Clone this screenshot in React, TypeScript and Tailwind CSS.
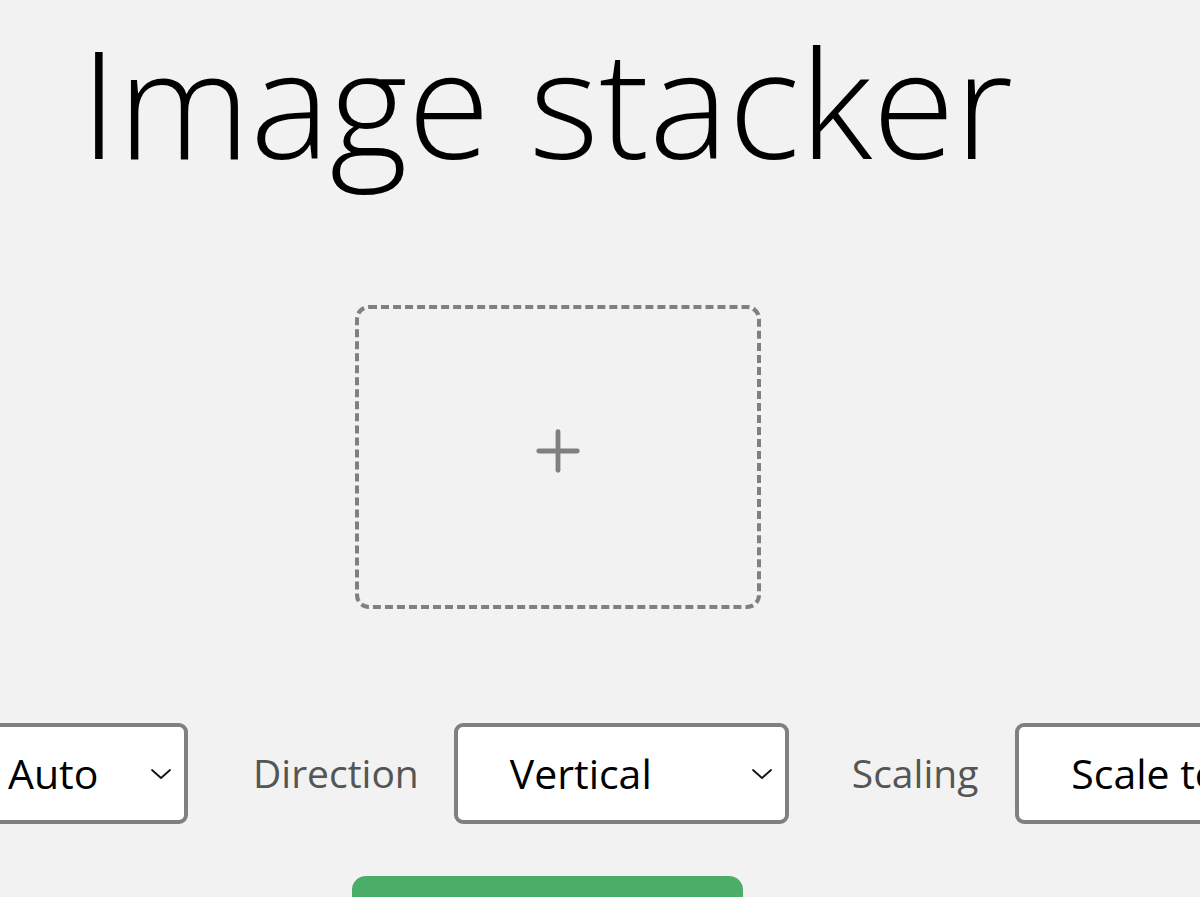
import { Plus } from 'lucide-react'

function Chevron() {
  return (
    <svg width="22" height="12" viewBox="0 0 22 12" fill="none" stroke="#111" strokeWidth="1.8" strokeLinecap="round" strokeLinejoin="round">
      <path d="M2 2l9 8 9-8" />
    </svg>
  )
}

function FakeSelect({ value, width }: { value: string; width: string }) {
  return (
    <div className={`flex shrink-0 items-center justify-between h-[101px] rounded-[9px] border-4 border-[#808080] bg-white pl-[52px] pr-[12px] ${width}`}>
      <span className="text-[41px] text-black whitespace-nowrap">{value}</span>
      <Chevron />
    </div>
  )
}

function App() {
  return (
    <div className="min-h-screen w-full overflow-hidden bg-[#f2f2f2] font-['Open_Sans',sans-serif]">
      <main className="flex flex-col">
        <h1 className="ml-[80px] mt-[26px] text-[150px] leading-none font-light text-black whitespace-nowrap">
          Image stacker
        </h1>

        <div className="ml-[355px] mt-[129px] flex h-[304px] w-[406px] items-center justify-center rounded-[14px] border-4 border-dashed border-[#808080]">
          <Plus size={66} strokeWidth={1.75} color="#808080" className="mb-[12px]" />
        </div>

        <div className="mt-[114px] ml-[-48px] flex items-center">
          <FakeSelect value="Auto" width="w-[236px]" />
          <label className="ml-[65px] mr-[35px] shrink-0 whitespace-nowrap text-[39px] text-[#555]">Direction</label>
          <FakeSelect value="Vertical" width="w-[335px]" />
          <label className="ml-[63px] mr-[37px] shrink-0 whitespace-nowrap text-[39px] text-[#555]">Scaling</label>
          <FakeSelect value="Scale to largest" width="w-[420px]" />
        </div>

        <button className="ml-[352px] mt-[52px] h-[90px] w-[391px] shrink-0 rounded-[14px] bg-[#4cad68]" />
      </main>
    </div>
  )
}

export default App
